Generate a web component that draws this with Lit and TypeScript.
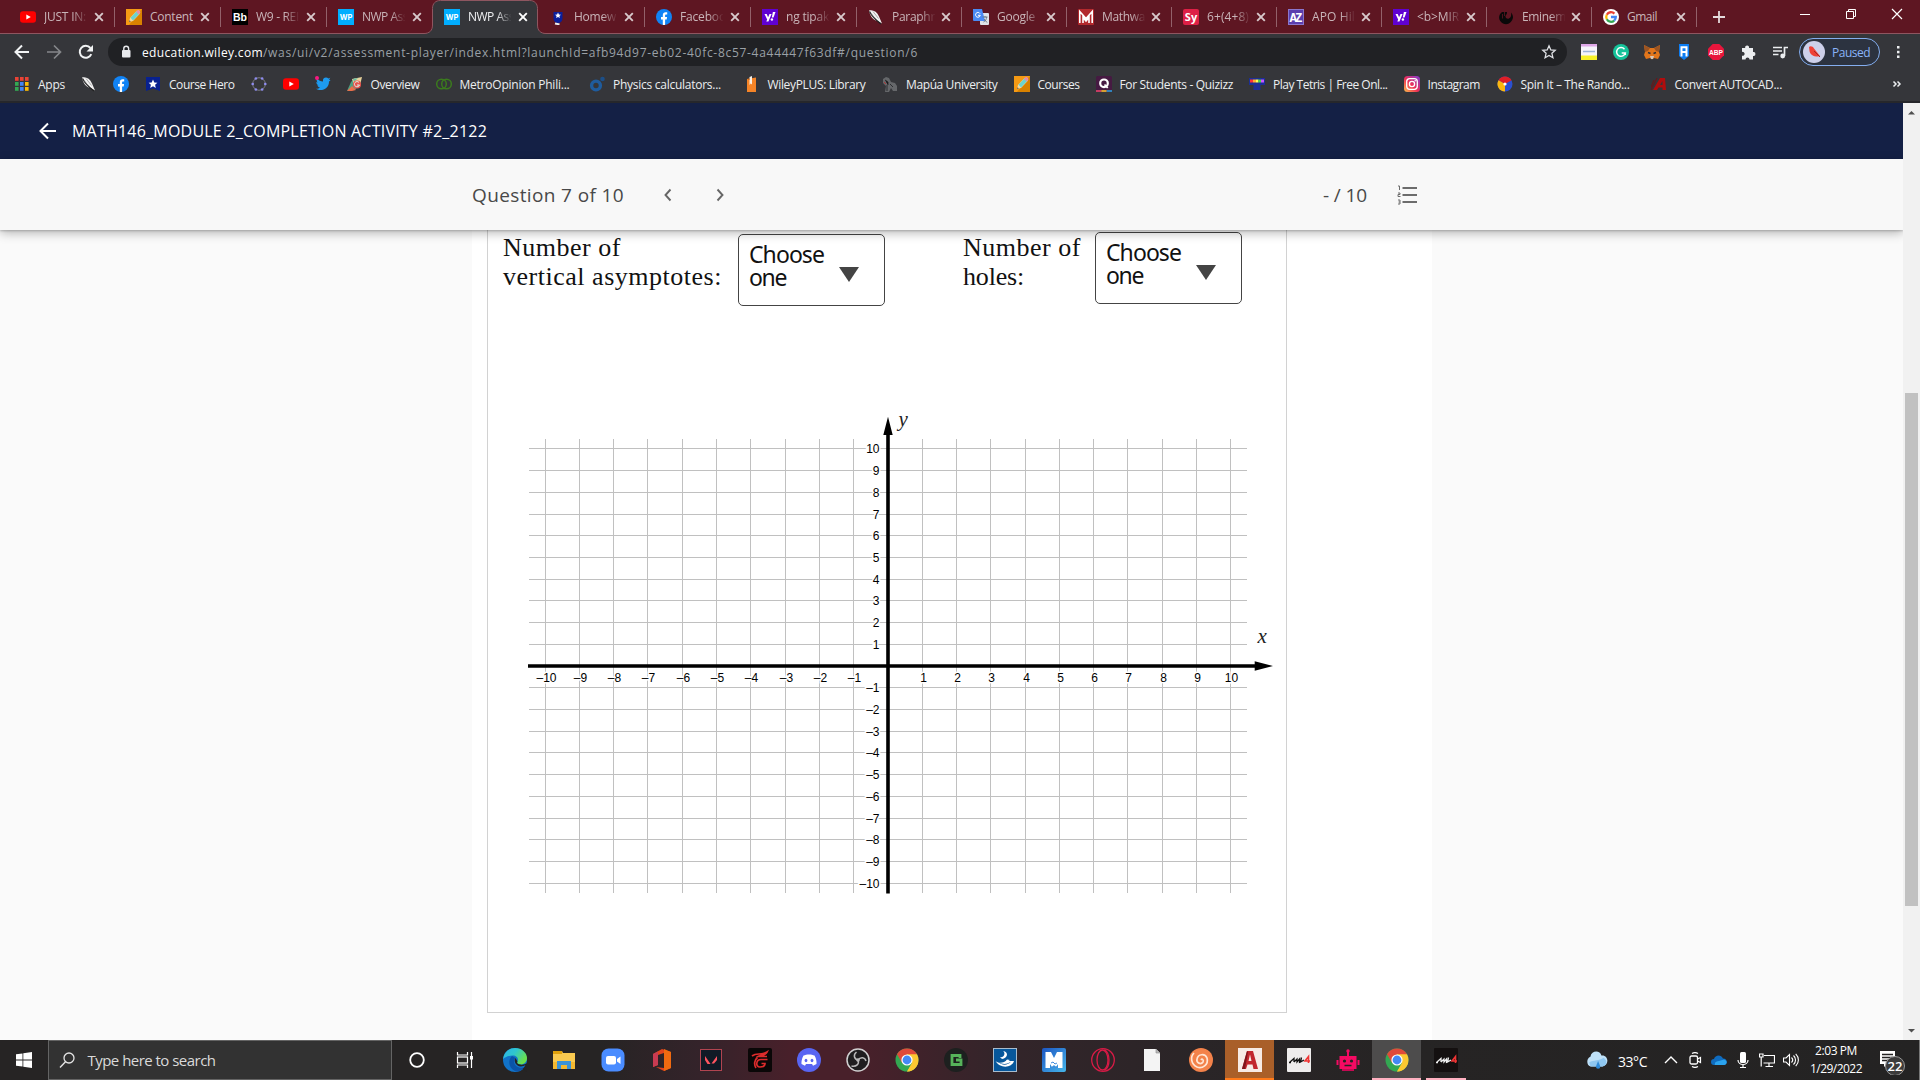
import { LitElement, html, css, svg, TemplateResult } from "lit";
import { customElement } from "lit/decorators.js";
import { classMap } from "lit/directives/class-map.js";

const icon = (body: unknown, size = 16, box = 16) =>
  html`<svg class="ic" width=${size} height=${size} viewBox="0 0 ${box} ${box}">${body}</svg>`;

const label = (value: string, width: number) => html`<span class="fit" data-w=${width}>${value}</span>`;

/* ---- small brand marks, all on a 16 unit box ---- */
const youtube = svg`<rect y="2.3" width="16" height="11.4" rx="3" fill="#f00"/><path d="M6.3 5.4v5.2L10.8 8z" fill="#fff"/>`;
const pencil = svg`<rect width="16" height="16" fill="#f59a14"/><path d="M16 0v16H3z" fill="#d98200"/><path d="M3 13l1-4 7-7.5 3 3L7 12z" fill="#f6d79a"/><path d="M4.5 8.7L11 1.8l2.7 2.8L7 11.4z" fill="#6cd3cf"/><path d="M10 2.8l1.6-1.6c1-.8 3.6 1.5 2.6 2.7l-1.5 1.5z" fill="#e88da4"/><path d="M3 13l.5-1.8 1.4 1.3z" fill="#555"/>`;
const blackboard = svg`<rect width="16" height="16" fill="#000"/><text x="8" y="12" text-anchor="middle" font-size="10.5" font-weight="700" fill="#fff" font-family="Liberation Sans">Bb</text>`;
const wiley = svg`<rect width="16" height="16" fill="#00aeff"/><text x="8" y="10.8" text-anchor="middle" font-size="7.5" font-weight="700" fill="#fff" font-family="Inter">WP</text>`;
const hero = svg`<path d="M3.500 3h9v6.500a4.500 4.500 0 0 1-9 0z" fill="#0a1f9c"/><path d="M8 3.600l.9 1.900 2.100.2-1.600 1.400.5 2L8 8.100 6.100 9.100l.5-2L5 5.700l2.100-.2z" fill="#fff"/><path d="M5 14.500l4.500 1" stroke="#eee" stroke-width="1.800"/>`;
const facebook = svg`<circle cx="8" cy="8" r="8" fill="#1183f5"/><path d="M6.800 16v-5.400H5V8h1.800V6.300c0-2 1.100-3 2.800-3h1.600v2.200h-1c-.9 0-1.100.5-1.100 1.100V8h2l-.4 2.600H9.100V16z" fill="#fff"/>`;
const yahoo = svg`<rect width="16" height="16" fill="#6001d2"/><path d="M2.500 5h2.200l1.400 3.200L7.500 5h2.100L6.400 12.600H4.300L5.200 10.600z" fill="#fff"/><path d="M10.900 3h2.600l-2 5.500H9.800z" fill="#fff"/><circle cx="9.900" cy="10.500" r="1.200" fill="#fff"/>`;
const feather = svg`<path d="M1 1.500c4-1 8 1 10 6l3 7-4.500-2.500C5 11 2 7 1 1.500z" fill="#f3f3f3"/><path d="M1.500 2.500c2.500 5 5.500 8 11.500 12.500" stroke="#222" stroke-width="1.300" fill="none"/><path d="M5 2.500l5.500 7M3 4.500l4 5" stroke="#777" stroke-width=".6"/>`;
const translate = svg`<rect x="7" y="4" width="9" height="12" rx="1" fill="#dfe3e8"/><path d="M0 0h9l3 12H1a1 1 0 0 1-1-1z" fill="#4a8af4"/><path d="M9.500 8h5M12 7v1.500M10.500 13c2-1 3-3 3.200-5M11 10l3 3.500" stroke="#6b7a85" fill="none"/><path d="M7 4.600A2.400 2.400 0 1 0 7.300 6.300H5" stroke="#fff" fill="none"/>`;
const mathway = svg`<rect width="16" height="16" rx="1" fill="#b3292d"/><path d="M1.800 14V2.500L8 9.500l6.200-7V14M5 14V8.500l3 3.500 3-3.500V14" stroke="#fff" stroke-width="1.600" fill="none"/>`;
const symbolab = svg`<rect width="16" height="16" rx="2" fill="#de2046"/><text x="8" y="11.500" text-anchor="middle" font-size="11" font-weight="700" fill="#fff" font-family="Open Sans">Sy</text>`;
const azlyrics = svg`<rect width="16" height="16" rx="1" fill="#5b3fae"/><rect x=".5" y=".5" width="15" height="15" fill="none" stroke="#8b76cc"/><text x="8" y="12.500" text-anchor="middle" font-size="12.500" font-weight="700" fill="#fff" font-family="Liberation Mono" textLength="13">AZ</text>`;
const genius = svg`<path d="M4 3C0 6 0 12 5 14.500c5 2 9-1 10-6 0-2-.5-3-2-5 .5 3 0 5-2 6-2 .8-4-.5-3.500-2.500C8 5.500 9 6 9 3" fill="#090909"/><path d="M4.500 5v4.500M6.500 3v4" stroke="#5e1622" stroke-width=".8"/>`;
const google = svg`<circle cx="8" cy="8" r="8" fill="#fff"/><g fill="none" stroke-width="2.300"><path d="M11.400 4.600A4.800 4.800 0 0 0 3.800 5.700" stroke="#ea4335"/><path d="M3.800 5.700a4.800 4.800 0 0 0 0 4.600" stroke="#fbbc05"/><path d="M3.800 10.300a4.800 4.800 0 0 0 7.400 1.300" stroke="#34a853"/><path d="M11.200 11.600A4.800 4.800 0 0 0 12.800 8H8" stroke="#4285f4"/></g>`;

const chromeMark = svg`<circle cx="12" cy="12" r="11.500" fill="#33a852"/><path d="M12 12L2 6.300A11.500 11.500 0 0 1 22 6.300z" fill="#e04a3a"/><path d="M12 12V6.300H22A11.500 11.500 0 0 1 12 23.500l5-8.500z" fill="#fcc831"/><path d="M2 6.300L7.100 15 12 12V6.300z" fill="#e04a3a"/><path d="M12 23.500L17 15l-5-3-4.900 3" fill="#33a852"/><path d="M12 23.500L17 15h6.100A11.500 11.500 0 0 1 12 23.500z" fill="#fcc831"/><circle cx="12" cy="12" r="5.600" fill="#fff"/><circle cx="12" cy="12" r="4.400" fill="#4489f5"/>`;

type Tab = { mark: unknown; title: string; w?: number; active?: boolean };
const tabs: Tab[] = [
  { mark: youtube, title: "JUST IN:", w: 42 },
  { mark: pencil, title: "Content", w: 43 },
  { mark: blackboard, title: "W9 - REI", w: 43 },
  { mark: wiley, title: "NWP Ass", w: 46 },
  { mark: wiley, title: "NWP Ass", w: 46, active: true },
  { mark: hero, title: "Homew", w: 42 },
  { mark: facebook, title: "Faceboo", w: 46 },
  { mark: yahoo, title: "ng tipak", w: 43 },
  { mark: feather, title: "Paraphr", w: 43 },
  { mark: translate, title: "Google", w: 38 },
  { mark: mathway, title: "Mathwa", w: 43 },
  { mark: symbolab, title: "6+(4+8)", w: 42 },
  { mark: azlyrics, title: "APO Hil", w: 43 },
  { mark: yahoo, title: "<b>MIR", w: 42 },
  { mark: genius, title: "Eminem", w: 44 },
  { mark: google, title: "Gmail", w: 30 },
];

const appsColors = ["#ea4335", "#ea4335", "#ea4335", "#34a853", "#4285f4", "#fbbc05", "#34a853", "#4285f4", "#fbbc05"];
const apps = svg`${appsColors.map((c, i) => svg`<rect x=${1 + (i % 3) * 5} y=${1 + Math.floor(i / 3) * 5} width="3.600" height="3.800" fill=${c}/>`)}`;
const bookmarks: { mark: unknown; title?: string; w?: number; room?: number }[] = [
  { mark: apps, title: "Apps", w: 27 },
  { mark: feather },
  { mark: facebook },
  { mark: svg`<path d="M1 1h14v14l-7-2.500L1 15z" fill="#08218f"/><path d="M8 3.500l1.300 2.900 3.100.3-2.300 2.100.7 3.100L8 10.300l-2.800 1.600.7-3.100-2.300-2.100 3.100-.3z" fill="#fff"/>`, title: "Course Hero", w: 65.5 },
  { mark: svg`<circle cx="8" cy="8" r="6.300" fill="none" stroke="#8a8a94" stroke-width=".8"/>${[0, 1, 2, 3, 4, 5].map((i) => svg`<circle cx=${8 + 6.3 * Math.cos(i * 1.047)} cy=${8 + 6.3 * Math.sin(i * 1.047)} r="1.300" fill="#8e8cf0"/>`)}` },
  { mark: youtube },
  { mark: svg`<path d="M15.500 4.500l-1.500.9c.2 5-4 8.600-8.500 8.600-1.800 0-3.300-.4-4.500-1.300 1.700.1 3-.3 4-1.200-1.400-.2-2.300-1-2.700-2.200h1.200C2 8.700 1.300 7.500 1.300 6l1.400.4C1.500 5.200 1.500 3.800 2 2.500 3.700 4.300 5.600 5.400 8 5.500 7.500 3 9 1.500 11 1.500c1 0 1.800.4 2.400 1l1.900-.7-1.200 1.700z" fill="#1d9bf0"/><circle cx="2" cy="2" r="2" fill="#f91880"/>` },
  { mark: svg`<path d="M0 15l4-9 4-4 4 4-3 7z" fill="#4f9f80"/><path d="M5 3l10-2-2 8-5 3z" fill="#e9d29b"/><path d="M6 3l5-1-4 4z" fill="#69c0a5"/><path d="M0 15l5-5 4 4-4 1z" fill="#e86f4a"/><circle cx="10" cy="8.500" r="4" fill="#e9534e"/><path d="M12 6.500a2.600 2.600 0 1 0 .5 2.500H10" stroke="#d8f1e4" fill="none"/>`, title: "Overview", w: 49 },
  { mark: svg`<g fill="none" stroke="#3b7a1e" stroke-width="1.500"><circle cx="5.500" cy="8" r="4.800"/><circle cx="10.500" cy="8" r="4.800"/></g>`, title: "MetroOpinion Phili...", w: 110, room: 3.5 },
  { mark: svg`<circle cx="7" cy="9.500" r="4.400" fill="none" stroke="#1f5c9e" stroke-width="3.400"/><circle cx="13.500" cy="3" r="2.300" fill="#1c4f88"/>`, title: "Physics calculators...", w: 108, room: 6.5 },
  { mark: svg`<path d="M3 3l9-1.500V16H3z" fill="#f58427"/><path d="M5.500 1L8 0v8.500L6.700 7.500l-1.200 1.500z" fill="#f8efe4"/><path d="M3 3l2.500-.4V4z" fill="#b85a14"/>`, title: "WileyPLUS: Library", w: 98, room: 0.5 },
  { mark: svg`<path d="M1 3l3-2 3 1 2 4 4 1 2 3v5h-4l-2-3-2 4H3l1-6-3-3z" fill="#65676a"/><path d="M3 4l3 2v3M8 8l3 3M5 9v6" stroke="#2c2e31"/><path d="M2 6l2 2" stroke="#a33"/>`, title: "Mapúa University", w: 91.5 },
  { mark: pencil, title: "Courses", w: 42 },
  { mark: svg`<rect width="16" height="16" rx="1.500" fill="#461a42"/><circle cx="8" cy="7.300" r="3.800" fill="none" stroke="#fff" stroke-width="2.200"/><path d="M8.500 8.500l3.200 3.500" stroke="#fff" stroke-width="1.800"/><path d="M0 15h5.300" stroke="#e6446c" stroke-width="1.600"/><path d="M5.300 15h5.400" stroke="#fbc02d" stroke-width="1.600"/><path d="M10.700 15H16" stroke="#2d9cdb" stroke-width="1.600"/>`, title: "For Students - Quizizz", w: 113.5 },
  { mark: svg`<path d="M0 2h16v7h-4.500v5h-7V9H0z" fill="#1c2f96"/><path d="M1 5h3" stroke="#f33" stroke-width="3"/><path d="M4 5h3" stroke="#fa3" stroke-width="3"/><path d="M7 5h2.500" stroke="#ff5" stroke-width="3"/><path d="M9.500 5H12" stroke="#4d4" stroke-width="3"/><path d="M12 5h3" stroke="#c5f" stroke-width="3"/>`, title: "Play Tetris | Free Onl...", w: 114.5 },
  { mark: svg`<defs><linearGradient id="ig" x1="0" y1="1" x2="1" y2="0"><stop offset="0" stop-color="#fdc04b"/><stop offset=".45" stop-color="#ef2f55"/><stop offset="1" stop-color="#7b3bd6"/></linearGradient></defs><rect width="16" height="16" rx="3.500" fill="url(#ig)"/><rect x="2.700" y="2.700" width="10.600" height="10.600" rx="3" fill="none" stroke="#fff" stroke-width="1.300"/><circle cx="8" cy="8" r="2.600" fill="none" stroke="#fff" stroke-width="1.300"/><circle cx="11.200" cy="4.800" r=".8" fill="#fff"/>`, title: "Instagram", w: 52.5, room: 0.5 },
  { mark: svg`<circle cx="8" cy="8" r="7.500" fill="#2b50d0"/><path d="M8 8L1.500 4.200A7.500 7.500 0 0 1 14.500 4.200z" fill="#df1f26"/><path d="M8 8L1.500 4.200A7.500 7.500 0 0 0 8 15.500z" fill="#fbb80f"/><circle cx="8" cy="8" r="1.600" fill="#fff"/>`, title: "Spin It – The Rando...", w: 109, room: 5 },
  { mark: svg`<path d="M2 14L9 2h5l1 12h-3.500v-2.500H7.500L6 14z" fill="#b00d0d"/><path d="M9 9l2.500-4v4z" fill="#35363a"/><path d="M0 14L6 2M3 4l-3 7" stroke="#6d1517"/>`, title: "Convert AUTOCAD...", w: 107.5 },
];

const extensions = [
  svg`<rect width="16" height="16" fill="#f7f5fb"/><path d="M0 1h16" stroke="#dfa8e8" stroke-width="3"/><path d="M0 14h16" stroke="#f8f12a" stroke-width="5"/><path d="M2 7.500h12" stroke="#9db4d9" stroke-width="1.500"/>`,
  svg`<circle cx="8" cy="8" r="8" fill="#15c39a"/><path d="M11.500 5.200A4.400 4.400 0 1 0 12.300 9H8.700M12.300 8.500v2.500" fill="none" stroke="#fff" stroke-width="1.500"/>`,
  svg`<path d="M0 1l6 3h4l6-3-1 7 1 3-2 4-4-1-2 1.500L6 14l-4 1-2-4 1-3z" fill="#e2761b"/><path d="M0 1l6 3-2 3-3 1z" fill="#9c5422"/><path d="M16 1l-6 3 2 3 3 1z" fill="#9c5422"/><path d="M6 12h4l-1 3H7z" fill="#d6c6b8"/><path d="M4 8.500l2.500 1M12 8.500l-2.500 1" stroke="#2a2d38" stroke-width="1.400"/>`,
  svg`<path d="M3 0h10v12l-5 4-5-4z" fill="#0d7df2"/><path d="M5.500 12.500V3.300h5v9.200M5.500 8h5" stroke="#fff" stroke-width="2" fill="none"/>`,
  svg`<path d="M4.700 0h6.600L16 4.700v6.600L11.300 16H4.700L0 11.300V4.700z" fill="#e8163c"/><text x="8" y="11" text-anchor="middle" font-size="8" font-weight="700" fill="#fff" font-family="Liberation Sans" textLength="14" lengthAdjust="spacingAndGlyphs">ABP</text>`,
  svg`<path d="M2 4h3.200a2 2 0 1 1 3.800 0H13v4a2 2 0 1 1 0 3.900V15.500H9.500a2 2 0 1 0-4 0H2v-3.800a2 2 0 1 0 0-3.800z" fill="#eceef0"/>`,
  svg`<path d="M1 3.500h9M1 7h9M1 10.500h5.500" stroke="#eceef0" stroke-width="1.700"/><path d="M12.500 12V3.500H16" stroke="#eceef0" stroke-width="1.700" fill="none"/><circle cx="10.700" cy="12" r="2.400" fill="#eceef0"/>`,
];

/* ---- taskbar marks, on a 24 unit box ---- */
const mir = (bg: string, fg: string) => svg`<rect width="24" height="24" rx="1" fill=${bg}/><path d="M3 14l4-3.500v3.500M7 14l3-3v3l2.500-3v3l2-1.500M14.500 9.500l-1 4.500 3.500-2M2 14.500h2" stroke=${fg} stroke-width="1.300" fill="none"/><path d="M21.500 15V8.500l-3.500 4.500h5" stroke="#ef3434" stroke-width="1.600" fill="none"/>`;
const taskIcons: { mark: unknown; cls?: string }[] = [
  { mark: svg`<circle cx="12" cy="12" r="6.800" fill="none" stroke="#fff" stroke-width="1.800"/>` },
  { mark: svg`<path d="M3.500 4v3h10V4M3.500 20v-3h10v3" stroke="#fff" fill="none" stroke-width="1.200"/><rect x="3.500" y="9" width="10" height="6" fill="none" stroke="#fff" stroke-width="1.200"/><path d="M17.500 4v16" stroke="#fff" stroke-width="1.200"/><rect x="16" y="8" width="3" height="3.500" fill="#fff"/>` },
  { mark: svg`<defs><linearGradient id="ed" x1="0" y1="0" x2="1" y2=".5"><stop offset="0" stop-color="#2cb3e9"/><stop offset=".5" stop-color="#2fc6ce"/><stop offset="1" stop-color="#6ae04c"/></linearGradient></defs><circle cx="12" cy="12" r="12" fill="#1173c9"/><path d="M0 11C1 4 6 0 12 0c7 0 12 5 12 10 0 4-3 6.500-6.500 6.500-3 0-4-1.500-3-3 1.500-3-1-6-4.500-6-5 0-8.500 2-10 3.500z" fill="url(#ed)"/><path d="M9 8c-4 3-4 12 3 15 4 1 8-1 10-4-5 2-11 0-11-6 0-1 .5-2 1.500-3" fill="#0b53a8"/><path d="M12.500 10c-2 3 0 8 5 8.500 2 .2 4-.8 5-1.500-1 2-2 3-3 4l5 3V15c-2 1.500-5 2-7 1.500-3 0-4-1.500-3-3z" fill="#252323"/>` },
  { mark: svg`<path d="M1 3h9l1 2h12v16H1z" fill="#f9ca50"/><path d="M1 3h9v3H1z" fill="#e0a10c"/><path d="M1 14h22v7H1z" fill="#f3b830"/><path d="M5 21v-8h14v8h-4v-4H9v4z" fill="#3a93d8"/>` },
  { mark: svg`<rect x=".5" y=".5" width="23" height="23" rx="7" fill="#4a8cff"/><rect x="5" y="8" width="10" height="8.500" rx="2" fill="#fff"/><path d="M16 11l3.500-2.500V16L16 13.500z" fill="#fff"/>` },
  { mark: svg`<path d="M3 6l9-5 9 3v16l-7 3-8-4 8 1V5L8 7v10l-5 2z" fill="#e2441d"/><path d="M14 1l7 3v16l-7 3z" fill="#f06a10"/><path d="M3 6l5-2.500V17l-5 2z" fill="#c93b52"/>` },
  { mark: svg`<rect x="1.500" y="1.500" width="21" height="21" fill="#101a26" stroke="#b14450" stroke-width="1"/><path d="M6 8l5.500 8H8.500L6 12zM18 8v4l-3 3.500h-2.500z" fill="#ff5560"/>` },
  { mark: svg`<rect width="24" height="24" rx="2" fill="#0a0707"/><path d="M4 8c5-4 8 0 15-4-2 4-7 3-9 4.500h9M19.500 11.500H13c-5 0-6 7.500-1 7.500 3 0 5-.8 5-3.500h-3.500M9.500 9.500C6 12 6 17 8 20" stroke="#dd2c2c" stroke-width="1.700" fill="none"/>` },
  { mark: svg`<circle cx="12" cy="12" r="12" fill="#5865f2"/><path d="M6.500 7.500c3-1.500 8-1.500 11 0 1.800 3 2.200 6 2 8.500l-3.500 1.700-1-1.700H9l-1 1.700L4.500 16c-.2-2.500.3-5.500 2-8.500z" fill="#fff"/><ellipse cx="9" cy="12.500" rx="1.400" ry="1.700" fill="#5865f2"/><ellipse cx="15" cy="12.500" rx="1.400" ry="1.700" fill="#5865f2"/>` },
  { mark: svg`<circle cx="12" cy="12" r="11" fill="#1f1d1f" stroke="#d0cfd0" stroke-width="1.500"/><path d="M12 12c-4-1-5-5-1.500-8M12 12c2.500-3.500 7-3 8 1M12 12c1.500 4-1.500 7-6.500 6" stroke="#b9b8b9" stroke-width="1.500" fill="none"/><circle cx="12" cy="12" r="1.800" fill="#b9b8b9"/>` },
  { mark: chromeMark },
  { mark: svg`<circle cx="12" cy="12" r="12" fill="#1d201f"/><path d="M16 10V7.500H8v9h9V12h-5" stroke="#56b35a" stroke-width="2.800" fill="none"/>` },
  { mark: svg`<rect x=".5" y=".5" width="23" height="23" fill="#07579b" stroke="#a9bccd"/><path d="M7 9c4 1 6-4 3-6 6 1 5 7-1 8zM2.500 13c3 3 9 2 11.500-1.500l3 .5-1.500 1H21c-2 7-14 8-18.500 0z" fill="#fff"/><path d="M6 14.500c3 2 9 2 12-1-3 4-9 4-12 1z" fill="#07579b"/>` },
  { mark: svg`<defs><linearGradient id="mm" x1="0" y1="0" x2="1" y2="1"><stop offset="0" stop-color="#1c55c2"/><stop offset="1" stop-color="#46b6ea"/></linearGradient></defs><rect width="24" height="24" rx="2" fill="url(#mm)"/><path d="M3.500 20V4H9l3 6 3-6h5.500v16H16v-4l-2 3-2-2-2 2-2-3v4z" fill="#fff"/><path d="M9 15l2-1 2 2 2-1M10 19h6" stroke="#3e8adb" fill="none"/>` },
  { mark: svg`<g fill="none" stroke="#d81b46" stroke-width="1.300"><circle cx="12" cy="12" r="11.300"/><ellipse cx="11.500" cy="12" rx="5.500" ry="10"/><path d="M13.500 1.500c6 4 6 17 0 21"/></g>` },
  { mark: svg`<path d="M4 1h12l4 4v18H4z" fill="#f4f4f4"/><path d="M16 1v4h4" fill="#bbb" stroke="#888" stroke-width=".6"/>` },
  { mark: svg`<circle cx="12" cy="12" r="12" fill="#f3824a"/><path d="M12 12c1-2 3 0 2 2-2 3-7 1-6-3 1-5 8-6 10-1 2 7-5 11-10 9-6-3-7-10-3-14" fill="none" stroke="#ffe5d4" stroke-width="1.700"/>` },
  { mark: svg`<rect width="24" height="24" fill="#f7ebe5"/><path d="M4 21L9 3h6l5 18h-4.500l-1-4.500h-5L8 21z" fill="#c2272d"/><path d="M10.500 13h3L12 6.500z" fill="#f7ebe5"/><path d="M4 21l5-18 1 1-3 17z" fill="#80151b"/>`, cls: "autocad" },
  { mark: mir("#eeecec", "#111") },
  { mark: svg`<path d="M3.500 8h17v13h-17z" fill="#f50a63"/><circle cx="12" cy="3" r="1.700" fill="#f50a63"/><path d="M12 3v5M1.500 12v5M22.500 12v5" stroke="#f50a63" stroke-width="2"/><circle cx="8.500" cy="13" r="1.600" fill="#262323"/><circle cx="15.500" cy="13" r="1.600" fill="#262323"/><path d="M8.500 17.500h7" stroke="#262323" stroke-width="1.500"/><path d="M6 21h12v2H6z" fill="#c40a52"/>` },
  { mark: chromeMark, cls: "current" },
  { mark: mir("#141010", "#eee"), cls: "running" },
];

const xs = [545, 579, 613, 647, 682, 716, 750, 785, 819, 853, 888, 922, 956, 990, 1025, 1059, 1093, 1127, 1162, 1196, 1230];
const ys = [448, 470, 492, 514, 535, 557, 579, 600, 622, 644, 666, 687, 709, 731, 752, 774, 796, 818, 839, 861, 883];
const num = (n: number) => (n < 0 ? "–" + -n : "" + n);

@customElement("app-root")
export class AppRoot extends LitElement {
  static styles = css`
    :host { display: block; width: 1920px; height: 1080px; overflow: hidden; font-family: "Open Sans", "Noto Sans", sans-serif; font-size: 12px; }
    * { box-sizing: border-box; }
    .ic { display: block; flex: none; }
    .fit { display: inline-block; white-space: pre; flex: none; }

    .tabs { display: flex; height: 34px; background: #5e1622; border-bottom: 1px solid #8e5660; padding-left: 8px; color: #c9b5b9; }
    .tab { position: relative; display: flex; align-items: center; width: 106px; height: 33px; padding-left: 12px; gap: 8px; }
    .tab.narrow { width: 105px; }
    .tab.sep::before { content: ""; position: absolute; left: 0; top: 7px; width: 1px; height: 20px; background: #93616a; }
    .tab.active { color: #eff0f2; }
    .shape { position: absolute; left: -8px; top: 0; }
    .title { position: relative; width: 43px; overflow: hidden; height: 18px; line-height: 17px; }
    .tab .title.fade { -webkit-mask-image: linear-gradient(90deg, #000 66%, transparent 102%); }
    .tab .ic { position: relative; }
    .close { margin-left: -1px; }
    .narrow .close { margin-left: -2px; }
    .plus { width: 46px; padding-left: 15px; display: flex; align-items: center; position: relative; }
    .plus::before { content: ""; position: absolute; left: 0; top: 7px; width: 1px; height: 20px; background: #93616a; }
    .controls { display: flex; margin-left: auto; height: 28px; }
    .controls .ic { margin: 6px 15px; }

    .toolbar { display: flex; align-items: center; height: 36px; background: #35363a; padding: 0 14px 0 14px; }
    .nav { display: flex; gap: 16px; }
    .url { display: flex; align-items: center; width: 1459px; height: 28px; border-radius: 14px; background: #202124; margin-left: 14px; padding: 0 10px; color: #9aa0a6; }
    .url .lock { margin-right: 8px; }
    .host { color: #fff; }
    .star { margin-left: auto; }
    .exts { display: flex; gap: 15.9px; margin-left: 14px; }
    .profile { display: flex; align-items: center; width: 81px; height: 28px; border: 1px solid #84aef0; border-radius: 14px; background: #2c3340; margin-left: 11px; padding-left: 3px; gap: 7px; color: #8ab4f8; }
    .menu { margin-left: 10px; }

    .bookmarks { display: flex; align-items: center; height: 33px; background: #35363a; border-bottom: 2px solid #26272b; padding: 0 18px 3px 14px; gap: 16px; color: #eceef0; }
    .mark { display: flex; align-items: center; gap: 8px; flex: none; }
    .more { margin-left: auto; }

    .view { display: flex; height: 937px; }
    .page { width: 1903px; background: #fafafa; display: flex; flex-direction: column; overflow: hidden; }
    .bar { flex: none; height: 56px; background: #142045; color: #fff; display: flex; align-items: center; padding-left: 36px; gap: 12px; font-size: 16px; font-weight: 500; }
    .sub { flex: none; height: 71px; background: #f8f8f8; display: flex; align-items: center; padding: 1px 0 0 472px; color: #484848; font-size: 19px; position: relative; z-index: 1; box-shadow: 0 1px 2px rgba(0, 0, 0, .2), 0 3px 10px rgba(0, 0, 0, .28); }
    .prev { margin-left: 32px; }
    .next { margin-left: 28px; }
    .score { margin-left: 591px; }
    .list { margin-left: 28px; }
    .sheet { width: 960px; height: 810px; margin-left: 472px; background: #fff; padding-left: 15px; }
    .panel { width: 800px; height: 783px; border: 1px solid #d2d2d2; border-top: 0; }
    .asks { display: flex; height: 170px; padding-left: 15px; align-items: flex-start; }
    .ask { font-family: "Liberation Serif", serif; font-size: 26px; line-height: 29px; color: #111; width: 235px; padding-top: 3px; }
    .ask.second { width: 132px; margin-left: 78px; }
    .ask .fit { display: block; }
    .select { display: flex; justify-content: space-between; width: 147px; height: 72px; border: 1.5px solid #444; border-radius: 5px; margin-top: 4px; padding: 8px 25px 0 10px; color: #111; font-family: "Noto Sans", sans-serif; font-size: 23px; line-height: 23px; }
    .select.second { margin-top: 2px; }
    .select .fit { display: block; }
    .caret { width: 0; height: 0; border: 10px solid transparent; border-top: 15px solid #444; border-bottom: 0; margin-top: 24px; }
    .chart { display: block; }
    .line { stroke: #c0c0c0; stroke-width: 1; }
    .tick { font-family: "Liberation Sans", sans-serif; font-size: 12px; fill: #000; stroke: #fff; stroke-width: 3px; paint-order: stroke; }
    .var { font-family: "Liberation Serif", serif; font-style: italic; font-size: 21px; fill: #222; }
    .scroll { width: 17px; background: #f1f1f1; display: flex; flex-direction: column; align-items: center; justify-content: space-between; padding: 5px 0; position: relative; }
    .thumb { position: absolute; left: 2px; top: 290px; width: 13px; height: 513px; background: #c1c1c1; }

    .taskbar { display: flex; height: 40px; color: #fff; background: linear-gradient(90deg, #262424 0, #262424 600px, #34232a 700px, #48202a 790px, #48202a 860px, #33252a 1000px, #2a2527 1200px, #262424 1400px, #242323 100%); }
    .start { width: 48px; display: grid; place-items: center; }
    .search { width: 344px; border: 1px solid #646464; background: #323232; display: flex; align-items: center; padding-left: 10px; gap: 12.5px; color: #dadada; font-size: 15px; }
    .task { width: 49px; display: grid; place-items: center; }
    .autocad { background: #a95f29; border-bottom: 2px solid #ff7a1a; padding-top: 2px; }
    .current { background: #4d4c4c; border-bottom: 2px solid #ffb1c1; padding-top: 2px; }
    .running { background: linear-gradient(#ffb1c1, #ffb1c1) 5px 38px / 40px 2px no-repeat; }
    .tray { display: flex; align-items: center; margin-left: auto; width: 334px; }
    .temp { font-size: 14px; margin: 3px 0 0 10px; width: 41px; }
    .tray .small { width: 24px; display: grid; place-items: center; }
    .clock { width: 54px; margin-left: 6px; font-size: 12px; line-height: 18px; text-align: center; display: flex; flex-direction: column; align-items: center; }
    .notice { margin-left: 16px; }
    .edge { width: 1px; height: 40px; background: #777; margin-left: 10px; }
  `;

  updated() {
    this.renderRoot.querySelectorAll<HTMLElement>(".fit").forEach((el) => {
      const target = Number(el.dataset.w);
      el.style.letterSpacing = "0px";
      const range = document.createRange();
      range.selectNodeContents(el);
      const natural = range.getBoundingClientRect().width;
      el.style.letterSpacing = `${(target - natural) / (el.textContent || " ").length}px`;
      el.style.width = `${target}px`;
    });
  }

  private tab(t: Tab, i: number): TemplateResult {
    const cls = { tab: true, active: !!t.active, narrow: i > 7, sep: i > 0 && i !== 4 && i !== 5 };
    return html`<div class=${classMap(cls)}>
      ${t.active ? html`<svg class="shape" width="122" height="34" viewBox="0 0 122 34"><path d="M0 34v-.5c5.500 0 8.500-3 8.500-8.500V8.500c0-5 3-8 8-8h89c5 0 8 3 8 8V25c0 5.500 3 8.500 8.500 8.500v.5z" fill="#35363a"/><path d="M0 33.500c5.500 0 8.500-3 8.500-8.500V8.500c0-5 3-8 8-8h89c5 0 8 3 8 8V25c0 5.500 3 8.500 8.500 8.500" fill="none" stroke="#8e5660"/></svg>` : ""}
      ${icon(t.mark)}
      <span class=${classMap({ title: true, fade: t.title !== "Content" && t.title !== "Gmail" })}>${label(t.title, t.w ?? 43)}</span>
      <span class="close">${icon(svg`<path d="M1.200 1.200l7.600 7.600M8.800 1.200L1.200 8.800" stroke=${t.active ? "#fff" : "#d8c9cc"} stroke-width="1.900"/>`, 10, 10)}</span>
    </div>`;
  }

  private chart() {
    return html`<svg class="chart" width="798" height="500" viewBox="488 400 798 500">
      <g shape-rendering="crispEdges">
        ${xs.map((x) => svg`<path class="line" d="M${x + 0.5} 439V893"/>`)}
        ${ys.map((y) => svg`<path class="line" d="M528.500 ${y + 0.5}H1247"/>`)}
      </g>
      ${xs.map((x, i) => (i === 10 ? "" : svg`<text class="tick" x=${x + 1.5} y="682" text-anchor="middle">${num(i - 10)}</text>`))}
      ${ys.map((y, i) => (i === 10 ? "" : svg`<text class="tick" x="879.500" y=${y + 5} text-anchor="end">${num(10 - i)}</text>`))}
      <path d="M528 666H1256M888 434V893.500" stroke="#000" stroke-width="3.600"/>
      <path d="M1254.700 661.300L1273 666l-18.300 4.700zM883.300 435L888 416.700l4.700 18.300z"/>
      <text class="var" x="898.500" y="425.500">y</text>
      <text class="var" x="1257.500" y="643">x</text>
    </svg>`;
  }

  render() {
    return html`
      <div class="tabs">
        ${tabs.map((t, i) => this.tab(t, i))}
        <div class="plus">${icon(svg`<path d="M8 2v12M2 8h12" stroke="#e4dadc" stroke-width="1.800"/>`)}</div>
        <div class="controls">
          ${icon(svg`<path d="M3 8.500h10" stroke="#fff"/>`)}
          ${icon(svg`<path d="M3.500 5.500h7v7h-7zM5.500 5.500v-2h7v7h-2" fill="none" stroke="#fff"/>`)}
          ${icon(svg`<path d="M3 3l10 10M13 3L3 13" stroke="#fff" stroke-width="1.200"/>`)}
        </div>
      </div>
      <div class="toolbar">
        <div class="nav">
          ${icon(svg`<path d="M15 8H2M8 1.500L1.500 8 8 14.500" fill="none" stroke="#f1f3f4" stroke-width="2"/>`)}
          ${icon(svg`<path d="M1 8h13M8 1.500L14.500 8 8 14.500" fill="none" stroke="#85878a" stroke-width="1.700"/>`)}
          ${icon(svg`<path d="M13.300 10.200A6 6 0 1 1 12.400 4" fill="none" stroke="#f1f3f4" stroke-width="2"/><path d="M15 1v6.500H8.500z" fill="#f1f3f4"/>`)}
        </div>
        <div class="url">
          <span class="lock">${icon(svg`<rect x="4" y="6" width="8.500" height="7.500" rx="1" fill="#e8eaed"/><path d="M5.800 6.500V4.600a2.400 2.400 0 0 1 4.800 0v1.900" fill="none" stroke="#e8eaed" stroke-width="1.400"/>`)}</span>
          <span class="host">${label("education.wiley.com", 121)}</span>
          ${label("/was/ui/v2/assessment-player/index.html?launchId=afb94d97-eb02-40fc-8c57-4a44447f63df#/question/6", 655)}
          <span class="star">${icon(svg`<path d="M8 1.800l1.800 4.100 4.400.4-3.300 3 1 4.400L8 11.400l-3.900 2.300 1-4.400-3.300-3 4.400-.4z" fill="none" stroke="#dfe1e5" stroke-width="1.300"/>`)}</span>
        </div>
        <div class="exts">${extensions.map((e) => icon(e))}</div>
        <div class="profile">
          ${icon(svg`<circle cx="11" cy="11" r="11" fill="#cdd0ea"/><path d="M6 6c1-1.500 4-1 5 1.500l6 7.500-2 .5c-5 0-8-2-8.500-5.500z" fill="#ee4036"/><path d="M11 10l6 6" stroke="#a32626"/>`, 22, 22)}
          ${label("Paused", 38)}
        </div>
        <span class="menu">${icon(svg`<g fill="#eceef0"><rect x="7" y="2" width="2.500" height="2.500"/><rect x="7" y="6.800" width="2.500" height="2.500"/><rect x="7" y="11.500" width="2.500" height="2.500"/></g>`)}</span>
      </div>
      <div class="bookmarks">
        ${bookmarks.map((b) => html`<div class="mark" style="padding-right:${b.room ?? 0}px">${icon(b.mark)}${b.title ? label(b.title, b.w!) : ""}</div>`)}
        <span class="more">${icon(svg`<path d="M1.500 2.500L4 5 1.500 7.500M5.500 2.500L8 5 5.500 7.500" fill="none" stroke="#eceef0" stroke-width="1.500"/>`, 10, 10)}</span>
      </div>
      <div class="view">
        <div class="page">
          <div class="bar">
            ${icon(svg`<path d="M20 12H5M12 4.500L4.500 12l7.500 7.500" fill="none" stroke="#fff" stroke-width="2"/>`, 24, 24)}
            ${label("MATH146_MODULE 2_COMPLETION ACTIVITY #2_2122", 415)}
          </div>
          <div class="sub">
            ${label("Question 7 of 10", 152)}
            <span class="prev">${icon(svg`<path d="M14.500 6.500L9.500 12l5 5.500" fill="none" stroke="#666" stroke-width="1.900"/>`, 24, 24)}</span>
            <span class="next">${icon(svg`<path d="M9.500 6.500l5 5.500-5 5.500" fill="none" stroke="#666" stroke-width="1.900"/>`, 24, 24)}</span>
            <span class="score">${label("- / 10", 44)}</span>
            <span class="list">${icon(svg`<path d="M7.500 5h14.500M7.500 12h14.500M7.500 19h14.500" stroke="#6c6c6c" stroke-width="2"/><path d="M3 3h1.500v4M3 10h2v1.500h-2v2h2.500M3 17h2v4h-2M3.500 19h1.500" fill="none" stroke="#6c6c6c"/>`, 24, 24)}</span>
          </div>
          <div class="sheet">
            <div class="panel">
              <div class="asks">
                <div class="ask">${label("Number of", 118)}${label("vertical asymptotes:", 219)}</div>
                <div class="select"><div>${label("Choose", 75)}${label("one", 37)}</div><span class="caret"></span></div>
                <div class="ask second">${label("Number of", 118)}${label("holes:", 61)}</div>
                <div class="select second"><div>${label("Choose", 75)}${label("one", 37)}</div><span class="caret"></span></div>
              </div>
              ${this.chart()}
            </div>
          </div>
        </div>
        <div class="scroll">
          ${icon(svg`<path d="M1 6.500L4.500 3 8 6.500z" fill="#505050"/>`, 9, 9)}
          <div class="thumb"></div>
          ${icon(svg`<path d="M1 3L4.500 6.500 8 3z" fill="#505050"/>`, 9, 9)}
        </div>
      </div>
      <div class="taskbar">
        <div class="start">${icon(svg`<path d="M0 2.300l6.500-.9v6.100H0zM7.300 1.300L16 0v7.500H7.300zM0 8.500h6.500v6.100L0 13.700zM7.300 8.500H16V16l-8.700-1.300z" fill="#fff"/>`)}</div>
        <div class="search">
          ${icon(svg`<circle cx="10" cy="6" r="5" fill="none" stroke="#e4e4e4" stroke-width="1.300"/><path d="M6.500 9.700L1 15.500" stroke="#e4e4e4" stroke-width="1.400"/>`)}
          ${label("Type here to search", 128)}
        </div>
        ${taskIcons.map((t) => html`<div class="task ${t.cls ?? ""}">${icon(t.mark, 24, 24)}</div>`)}
        <div class="tray">
          ${icon(svg`<path d="M4 16a5 5 0 0 1 0-9c1-6 9-6 10-1 6-1 8 8 1 10z" fill="#bfe1f8"/><path d="M3 12c4-2 9-1 13-4 4 3 3 7-1 8H5c-1 0-2-2-2-4z" fill="#8fc7f0"/><path d="M11 11l2 5a2 2 0 1 1-4 0z" fill="#2f8ad8"/>`, 22, 20)}
          <span class="temp">${label("33°C", 29)}</span>
          <span class="small">${icon(svg`<path d="M2 11l6-6 6 6" fill="none" stroke="#fff" stroke-width="1.400"/>`)}</span>
          <span class="small">${icon(svg`<rect x="3" y="4" width="7.500" height="8" rx="1.500" fill="none" stroke="#fff" stroke-width="1.300"/><path d="M10.500 7l3-1.500v5l-3-1.500M5 1.500c2-1.200 4-1.200 6 0M5 14.500c2 1.200 4 1.200 6 0" fill="none" stroke="#fff" stroke-width="1.200"/>`)}</span>
          <span class="small">${icon(svg`<path d="M3 13a3 3 0 0 1 0-6c1-4 7-5 9-.5 5 0 5 6.500 1 6.500z" fill="#0f6cc0"/><path d="M4 13c-1-3 2-4 4-4l5-1.500c4 1 3 5.500 0 5.500z" fill="#2ba3ee"/>`)}</span>
          <span class="small">${icon(svg`<rect x="5" y="0" width="6" height="11" rx="1.500" fill="#fff"/><path d="M3 8c0 6 10 6 10 0M8 12.500V16M5 15.500h6" fill="none" stroke="#fff" stroke-width="1.200"/>`)}</span>
          <span class="small">${icon(svg`<path d="M5 3.500h10.500v7.500H4.500M10 11v3M6.500 14.500H14M.5 2h3.500v3H.5zM2.200 5v9.500" fill="none" stroke="#fff" stroke-width="1.200"/>`)}</span>
          <span class="small">${icon(svg`<path d="M.5 6h2.500l3.500-3.500v11L3 10H.5zM8.500 5.500c1.500 1.500 1.500 3.500 0 5M10.500 3.500c2.700 2.500 2.700 6.500 0 9M12.700 1.800c3.600 3.700 3.600 8.700 0 12.400" fill="none" stroke="#fff" stroke-width="1.100"/>`)}</span>
          <div class="clock">${label("2:03 PM", 42)}${label("1/29/2022", 52)}</div>
          <span class="notice">${icon(svg`<path d="M1 6h15v13H8l-3 3v-3H1z" fill="#fff"/><path d="M3 9.500h11M3 12.500h11M3 15.500h7" stroke="#242323" stroke-width="1.300"/><circle cx="16" cy="21" r="9.500" fill="#3c3b3b" stroke="#999"/><text x="16" y="25.500" text-anchor="middle" font-size="13" font-weight="600" fill="#fff" font-family="Open Sans">22</text>`, 30, 30)}</span>
          <span class="edge"></span>
        </div>
      </div>`;
  }
}
